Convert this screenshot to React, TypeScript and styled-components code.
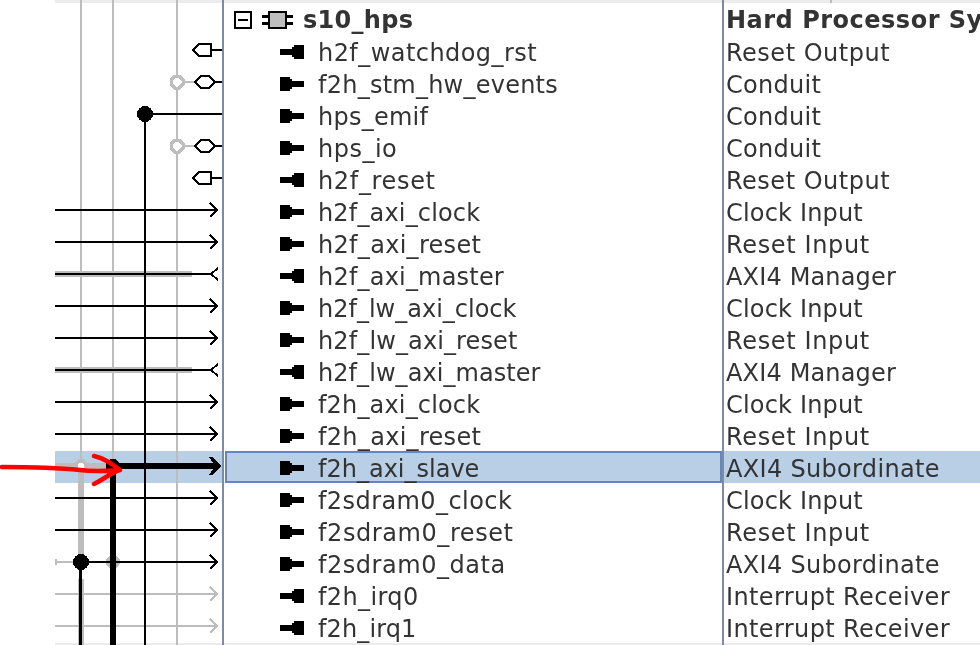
import React from 'react';
import styled, { createGlobalStyle } from 'styled-components';

const GlobalStyle = createGlobalStyle`
	html, body {
		margin: 0;
		padding: 0;
		background: #fff;
		overflow: hidden;
	}
`;

const BLACK = '#000';
const GREY = '#bdbdbd';
const SELECTED_BG = '#b8cfe6';
const BAR_BG = '#ececec';

const Page = styled.div`
	position: relative;
	width: 980px;
	height: 645px;
	overflow: hidden;
	display: flex;
	flex-direction: column;
	font-family: 'DejaVu Sans', sans-serif;
	color: #333;
`;

const Row = styled.div<{ $h: number }>`
	height: ${p => p.$h}px;
	flex: none;
	display: grid;
	grid-template-columns: 55px 167px 2px 498px 2px 1fr;
	align-items: stretch;
`;

const Gutter = styled.div``;

const Divider = styled.div`
	background: #7d8ca3;
`;

const WireCell = styled.div<{ $bg?: string }>`
	background: ${p => p.$bg || 'transparent'};
	overflow: hidden;
	svg {
		display: block;
	}
`;

const BarCell = styled.div`
	background: ${BAR_BG};
`;

const BarTick = styled.div`
	width: 2px;
	height: 100%;
	margin-left: 106px;
	background: #bdbdbd;
`;

const NameCell = styled.div<{ $selected?: boolean; $indent: number }>`
	display: flex;
	align-items: center;
	box-sizing: border-box;
	white-space: nowrap;
	padding-left: ${p => p.$indent}px;
	${p =>
		p.$selected &&
		`
		margin-left: 1px;
		padding-left: ${p.$indent - 3}px;
		background: ${SELECTED_BG};
		border: 2px solid #6585bf;
	`}
`;

// the source picture is a 2x capture, so text is set at 12px and doubled; $track stands in for its hinted spacing
const Label = styled.span<{ $bold?: boolean; $track?: number }>`
	display: inline-block;
	font-size: 12px;
	line-height: 16px;
	font-weight: ${p => (p.$bold ? 700 : 400)};
	letter-spacing: ${p => p.$track || 0}px;
	transform: scale(2);
	transform-origin: 0 50%;
	margin-top: ${p => (p.$bold ? 2 : 4)}px;
	filter: blur(0.2px);
`;

const TypeCell = styled.div<{ $selected?: boolean }>`
	display: flex;
	align-items: center;
	padding-left: 2px;
	white-space: nowrap;
	overflow: hidden;
	background: ${p => (p.$selected ? SELECTED_BG : 'transparent')};
`;

const TreeBox = styled.svg`
	flex: none;
	margin: 2px 10px 0 0;
`;

const ChipIcon = styled.svg`
	flex: none;
	margin: 2px 10px 0 0;
`;

const PortGlyph = styled.svg`
	flex: none;
	margin: 2px 14px 0 0;
`;

const Annotation = styled.svg`
	position: absolute;
	left: 0;
	top: 0;
	pointer-events: none;
`;

type Port = 'in' | 'out';
type Wire = 'none' | 'resetOut' | 'conduit' | 'emif' | 'arrow' | 'master' | 'selected' | 'data' | 'irq';

interface RowData {
	name: string;
	track: number;
	type: string;
	port: Port;
	wire: Wire;
}

const typeTrack: Record<string, number> = {
	'Reset Output': 0.25,
	Conduit: 0.14,
	'Clock Input': 0.09,
	'Reset Input': 0.32,
	'AXI4 Manager': 0.08,
	'AXI4 Subordinate': 0.16,
	'Interrupt Receiver': 0.19,
};

const rows: RowData[] = [
	{ name: 'h2f_watchdog_rst', track: 0.22, type: 'Reset Output', port: 'out', wire: 'resetOut' },
	{ name: 'f2h_stm_hw_events', track: 0.12, type: 'Conduit', port: 'in', wire: 'conduit' },
	{ name: 'hps_emif', track: 0.12, type: 'Conduit', port: 'in', wire: 'emif' },
	{ name: 'hps_io', track: 0.25, type: 'Conduit', port: 'in', wire: 'conduit' },
	{ name: 'h2f_reset', track: 0.33, type: 'Reset Output', port: 'out', wire: 'resetOut' },
	{ name: 'h2f_axi_clock', track: 0.08, type: 'Clock Input', port: 'in', wire: 'arrow' },
	{ name: 'h2f_axi_reset', track: 0.15, type: 'Reset Input', port: 'in', wire: 'arrow' },
	{ name: 'h2f_axi_master', track: 0.1, type: 'AXI4 Manager', port: 'out', wire: 'master' },
	{ name: 'h2f_lw_axi_clock', track: 0, type: 'Clock Input', port: 'in', wire: 'arrow' },
	{ name: 'h2f_lw_axi_reset', track: 0.06, type: 'Reset Input', port: 'in', wire: 'arrow' },
	{ name: 'h2f_lw_axi_master', track: 0.03, type: 'AXI4 Manager', port: 'out', wire: 'master' },
	{ name: 'f2h_axi_clock', track: 0.08, type: 'Clock Input', port: 'in', wire: 'arrow' },
	{ name: 'f2h_axi_reset', track: 0.15, type: 'Reset Input', port: 'in', wire: 'arrow' },
	{ name: 'f2h_axi_slave', track: 0, type: 'AXI4 Subordinate', port: 'in', wire: 'selected' },
	{ name: 'f2sdram0_clock', track: 0.21, type: 'Clock Input', port: 'in', wire: 'arrow' },
	{ name: 'f2sdram0_reset', track: 0.29, type: 'Reset Input', port: 'in', wire: 'arrow' },
	{ name: 'f2sdram0_data', track: 0.27, type: 'AXI4 Subordinate', port: 'in', wire: 'data' },
	{ name: 'f2h_irq0', track: 0.19, type: 'Interrupt Receiver', port: 'out', wire: 'irq' },
	{ name: 'f2h_irq1', track: 0.06, type: 'Interrupt Receiver', port: 'out', wire: 'irq' },
];

// row numbers, counting the s10_hps header as 0
const EMIF_ROW = 3;
const SELECTED_ROW = 14;
const DATA_ROW = 17;

// x of the four bus lines inside the wire panel, which starts 55px from the left
const X0 = 26;
const X1 = 58;
const X2 = 90;
const X3 = 122;
const MID = 15;

const V = ({ x, y1, y2, c = GREY, w = 2 }: { x: number; y1: number; y2: number; c?: string; w?: number }) => (
	<line x1={x} x2={x} y1={y1} y2={y2} stroke={c} strokeWidth={w} />
);
const H = ({ x1, x2, c = BLACK, w = 2 }: { x1: number; x2: number; c?: string; w?: number }) => (
	<line x1={x1} x2={x2} y1={MID} y2={MID} stroke={c} strokeWidth={w} />
);
const Dot = ({ x, c = BLACK, r = 8 }: { x: number; c?: string; r?: number }) => (
	<circle cx={x} cy={MID} r={r} fill={c} />
);
const ArrowHead = ({ c = BLACK }: { c?: string }) => (
	<polyline points="155,8 162,15 155,22" fill="none" stroke={c} strokeWidth={2} />
);

const WireBody: React.FC<{ wire: Wire }> = ({ wire }) => {
	switch (wire) {
		case 'resetOut':
			return (
				<>
					<polygon points="144,9 156,9 156,21 144,21 138,15" fill="#fff" stroke={BLACK} strokeWidth={2} />
					<H x1={156} x2={167} />
				</>
			);
		case 'conduit':
			return (
				<>
					<H x1={129} x2={140} c={GREY} />
					<polygon points="120,9 124,9 128,13 128,17 124,21 120,21 116,17 116,13" fill="#fff" stroke={GREY} strokeWidth={3} />
					<polygon points="146,9 154,9 160,15 154,21 146,21 140,15" fill="#fff" stroke={BLACK} strokeWidth={2} />
					<H x1={160} x2={167} />
				</>
			);
		case 'emif':
			return (
				<>
					<H x1={X2} x2={167} />
					<Dot x={X2} />
				</>
			);
		case 'arrow':
			return (
				<>
					<H x1={0} x2={162} />
					<ArrowHead />
				</>
			);
		case 'master':
			return (
				<>
					<H x1={0} x2={137} c={GREY} w={6} />
					<H x1={0} x2={156} />
					<polyline points="163,9 156,15 163,21" fill="none" stroke={BLACK} strokeWidth={2} />
				</>
			);
		case 'selected':
			return (
				<>
					<H x1={0} x2={X1} c={GREY} w={6} />
					<Dot x={X0} c={GREY} r={7} />
					<Dot x={X0} c="#fff" r={3} />
					<H x1={X1} x2={160} w={6} />
					<polygon points="154,6 158,6 166,15 158,24 154,24 158,18 158,12" fill={BLACK} />
					<Dot x={X1} r={7} />
				</>
			);
		case 'data':
			return (
				<>
					<H x1={0} x2={X0} c={GREY} />
					<V x={1} y1={12} y2={18} />
					<H x1={X0} x2={162} />
					<ArrowHead />
				</>
			);
		case 'irq':
			return (
				<>
					<H x1={0} x2={162} c={GREY} />
					<ArrowHead c={GREY} />
				</>
			);
		default:
			return null;
	}
};

const WireGraphic: React.FC<{ wire?: Wire; row: number; h?: number }> = ({ wire = 'none', row, h = 32 }) => (
	<svg width={167} height={h} viewBox={`0 0 167 ${h}`} shapeRendering="crispEdges">
		{row < SELECTED_ROW && <V x={X0} y1={0} y2={h} />}
		{row === SELECTED_ROW && <V x={X0} y1={0} y2={MID} />}
		{row === SELECTED_ROW && <V x={X0} y1={MID} y2={h} w={6} />}
		{row > SELECTED_ROW && <V x={X0} y1={0} y2={row === DATA_ROW ? MID : h} w={6} />}
		{row > DATA_ROW && <V x={X0} y1={0} y2={h} w={6} />}
		{row < SELECTED_ROW && <V x={X1} y1={0} y2={h} />}
		{row === SELECTED_ROW && <V x={X1} y1={0} y2={MID} />}
		<V x={X3} y1={0} y2={h} />
		{row === DATA_ROW && <Dot x={X1} c={GREY} r={7} />}
		<WireBody wire={wire} />
		{row > DATA_ROW && <V x={X0 - 0.5} y1={0} y2={h} c={BLACK} w={3} />}
		{row === DATA_ROW && <V x={X0 - 0.5} y1={MID} y2={h} c={BLACK} w={3} />}
		{row === DATA_ROW && <Dot x={X0} />}
		{row >= SELECTED_ROW && <V x={X1} y1={row === SELECTED_ROW ? MID : 0} y2={h} c={BLACK} w={6} />}
		{row >= EMIF_ROW && <V x={X2} y1={row === EMIF_ROW ? MID : 0} y2={h} c={BLACK} />}
	</svg>
);

const PortIcon: React.FC<{ port: Port }> = ({ port }) => (
	<PortGlyph width={24} height={14} viewBox="0 0 24 14" shapeRendering="crispEdges">
		{port === 'in' ? (
			<path d="M0 0H10V2H12V4H24V10H12V12H10V14H0Z" fill={BLACK} />
		) : (
			<path d="M24 0H14V2H12V4H0V10H12V12H14V14H24Z" fill={BLACK} />
		)}
	</PortGlyph>
);

const Bar: React.FC<{ h: number; row: number; tick?: boolean }> = ({ h, row, tick }) => (
	<Row $h={h}>
		<Gutter />
		<WireCell $bg={BAR_BG}>
			<WireGraphic row={row} h={h} />
		</WireCell>
		<Divider />
		<BarCell />
		<Divider />
		<BarCell>{tick ? <BarTick /> : null}</BarCell>
	</Row>
);

export default function App() {
	return (
		<Page>
			<GlobalStyle />
			<Bar h={3} row={0} tick />
			<Row $h={32}>
				<Gutter />
				<WireCell>
					<WireGraphic row={0} />
				</WireCell>
				<Divider />
				<NameCell $indent={10}>
					<TreeBox width={18} height={18} viewBox="0 0 18 18" shapeRendering="crispEdges">
						<rect x="1" y="1" width="16" height="16" fill="#fff" stroke={BLACK} strokeWidth={2} />
						<rect x="4" y="8" width="10" height="2" fill={BLACK} />
					</TreeBox>
					<ChipIcon width={31} height={18} viewBox="0 0 31 18" shapeRendering="crispEdges">
						<rect x="0" y="4" width="31" height="3" fill={BLACK} />
						<rect x="0" y="11" width="31" height="3" fill={BLACK} />
						<rect x="7" y="1" width="17" height="16" fill={GREY} stroke={BLACK} strokeWidth={2} />
					</ChipIcon>
					<Label $bold $track={0.14}>s10_hps</Label>
				</NameCell>
				<Divider />
				<TypeCell>
					<Label $bold $track={0.25}>Hard Processor System</Label>
				</TypeCell>
			</Row>
			{rows.map((row, i) => {
				const selected = row.wire === 'selected';
				return (
					<Row $h={32} key={row.name}>
						<Gutter />
						<WireCell $bg={selected ? SELECTED_BG : undefined}>
							<WireGraphic wire={row.wire} row={i + 1} />
						</WireCell>
						<Divider />
						<NameCell $selected={selected} $indent={56}>
							<PortIcon port={row.port} />
							<Label $track={row.track}>{row.name}</Label>
						</NameCell>
						<Divider />
						<TypeCell $selected={selected}>
							<Label $track={typeTrack[row.type]}>{row.type}</Label>
						</TypeCell>
					</Row>
				);
			})}
			<Bar h={2} row={20} />
			<Annotation width={980} height={645} viewBox="0 0 980 645">
				<path
					d="M2 467 C30 467 60 468 80 470 C95 472 108 471 120 470 C112 464 104 458 94 456 M120 470 C112 472 106 478 94 484"
					fill="none"
					stroke="#f00"
					strokeWidth={4.5}
					strokeLinecap="round"
					strokeLinejoin="round"
				/>
			</Annotation>
		</Page>
	);
}
